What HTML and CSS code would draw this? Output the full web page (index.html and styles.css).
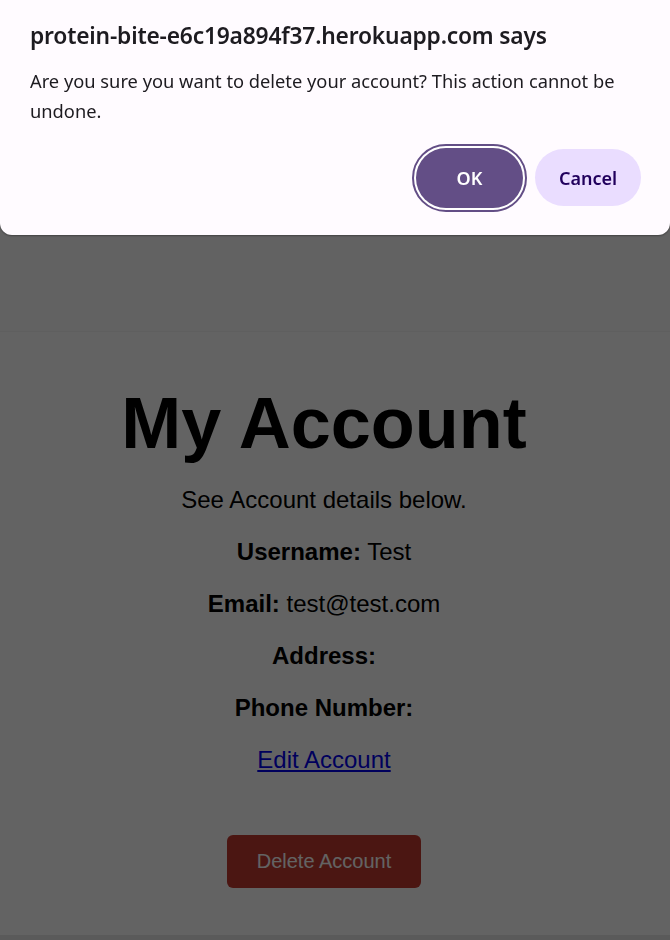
FILE: index.html
```html
<!DOCTYPE html>
<html lang="en">
<head>
<meta charset="utf-8">
<title>My Account</title>
<link rel="stylesheet" href="styles.css">
</head>
<body>
<header class="site-header"></header>
<main class="account">
  <h1 class="account-title">My Account</h1>
  <p class="account-line">See Account details below.</p>
  <p class="account-line"><strong>Username:</strong> Test</p>
  <p class="account-line"><strong>Email:</strong> test@test.com</p>
  <p class="account-line"><strong>Address:</strong></p>
  <p class="account-line"><strong>Phone Number:</strong></p>
  <p class="account-line"><a href="#" class="edit-link">Edit Account</a></p>
  <form class="delete-form">
    <button type="button" class="delete-btn">Delete Account</button>
  </form>
</main>
<footer class="site-footer"></footer>

<div class="scrim"></div>
<div class="dialog" role="alertdialog">
  <div class="dialog-title">protein-bite-e6c19a894f37.herokuapp.com says</div>
  <div class="dialog-message">Are you sure you want to delete your account? This action cannot be undone.</div>
  <div class="dialog-actions">
    <button type="button" class="dlg-btn dlg-ok">OK</button>
    <button type="button" class="dlg-btn dlg-cancel">Cancel</button>
  </div>
</div>
</body>
</html>
```
FILE: styles.css
```css
html, body {
  margin: 0;
  padding: 0;
}
body {
  background: #ffffff;
  font-family: "Liberation Sans", Arial, sans-serif;
  color: #000;
  height: 940px;
  overflow: hidden;
}
.site-header {
  height: 331px;
  background: #fdfdfd;
  border-bottom: 1px solid #f4f4f4;
}
.account {
  height: 603px;
  box-sizing: border-box;
  padding: 50px 22px 0 0;
  text-align: center;
  background: #ffffff;
}
.account-title {
  font-size: 72px;
  font-weight: bold;
  margin: 0 0 21px;
  line-height: 83px;
}
.account-line {
  font-size: 24px;
  margin: 0 0 24px;
  line-height: 28px;
}
.edit-link {
  color: #0000ee;
  text-decoration: underline;
}
.delete-form {
  margin: 61px 0 0;
}
.delete-btn {
  font-family: "Liberation Sans", Arial, sans-serif;
  font-size: 20px;
  line-height: 23px;
  padding: 15px 30px;
  border: 0;
  border-radius: 6px;
  background: #c23a30;
  color: #ffffff;
}
.site-footer {
  height: 40px;
  background: #e8e8e8;
}
.scrim {
  position: fixed;
  inset: 0;
  background: rgba(0, 0, 0, 0.61);
}
.dialog {
  position: fixed;
  top: 0;
  left: 0;
  right: 0;
  height: 235px;
  box-sizing: border-box;
  background: #fffbff;
  border-radius: 0 0 12px 12px;
  box-shadow: 0 1px 2px rgba(0, 0, 0, 0.35);
  padding: 20px 29px 0 30px;
  font-family: "Noto Sans", "Open Sans", sans-serif;
  color: #1d1b20;
  display: flex;
  flex-direction: column;
}
.dialog-title {
  font-size: 22.8px;
  font-weight: 600;
  line-height: 32px;
  letter-spacing: -0.2px;
}
.dialog-message {
  margin-top: 14px;
  font-size: 18.3px;
  line-height: 30px;
}
.dialog-actions {
  display: flex;
  justify-content: flex-end;
  gap: 12px;
  margin-top: 23px;
}
.dlg-btn {
  font-family: "Noto Sans", "Open Sans", sans-serif;
  font-size: 18px;
  font-weight: 600;
  width: 106px;
  height: 57px;
  border: 0;
  border-radius: 29px;
  padding: 0;
}
.dlg-ok {
  background: #634e86;
  color: #ffffff;
  outline: 2px solid #634e86;
  outline-offset: 2px;
  box-shadow: 0 0 0 2px #ffffff;
  width: 107px;
  height: 60px;
  margin-top: -1px;
  border-radius: 30px;
}
.dlg-cancel {
  background: #eaddff;
  color: #21005d;
}
```
